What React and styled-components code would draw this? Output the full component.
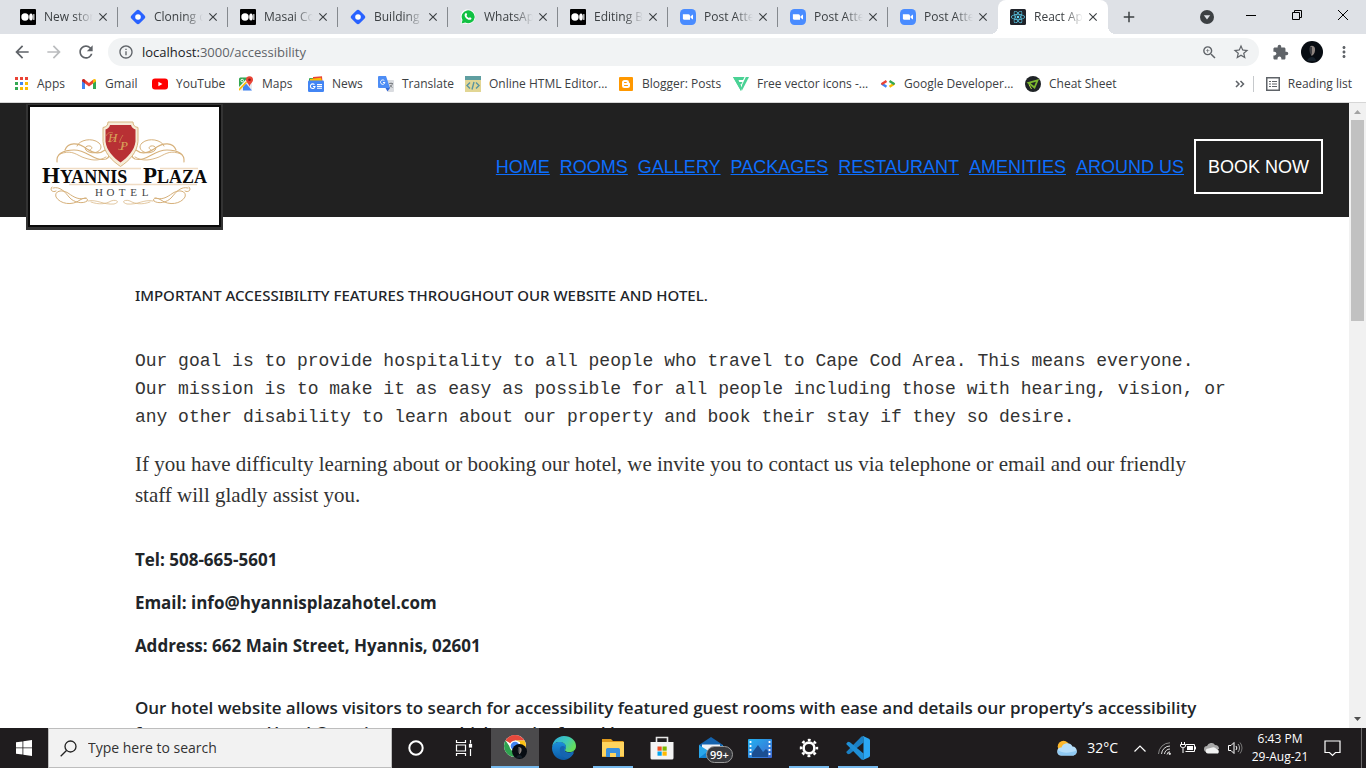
import React from "react";
import styled, { createGlobalStyle, css } from "styled-components";
import {
  MdArrowBack,
  MdArrowForward,
  MdRefresh,
  MdInfoOutline,
  MdZoomIn,
  MdStarBorder,
  MdExtension,
  MdMoreVert,
  MdClose,
  MdAdd,
} from "react-icons/md";
import { FaReact } from "react-icons/fa";

const ui = '"Open Sans", "Noto Sans", sans-serif';

const GlobalStyle = createGlobalStyle`
  *, *::before, *::after { box-sizing: border-box; }
  body { margin: 0; background: #fff; color: #212529; font-family: ${ui}; }
  button, input { font: inherit; color: inherit; }
  h1, p, ul { margin: 0; padding: 0; }
  svg { display: block; flex: none; }
`;

const Desktop = styled.div`
  display: flex;
  flex-direction: column;
  height: 100vh;
  overflow: hidden;
`;

const PlainButton = styled.button`
  display: flex;
  align-items: center;
  justify-content: center;
  padding: 0;
  border: 0;
  background: none;
  color: #5f6368;
`;

/* ---------- tab strip ---------- */

const TabStrip = styled.div`
  display: flex;
  align-items: stretch;
  height: 34px;
  flex: none;
  padding-left: 8px;
  background: #dee1e6;
`;

const Tab = styled.div`
  display: flex;
  align-items: center;
  flex: 0 1 110px;
  min-width: 0;
  padding: 0 8px 0 12px;
  border-radius: 8px 8px 0 0;
  ${(p) =>
    p.$active
      ? css`
          background: #fff;
          position: relative;
          &::before,
          &::after {
            content: "";
            position: absolute;
            bottom: 0;
            width: 8px;
            height: 8px;
          }
          &::before {
            left: -8px;
            background: radial-gradient(circle at 0 0, transparent 8px, #fff 8px);
          }
          &::after {
            right: -8px;
            background: radial-gradient(circle at 100% 0, transparent 8px, #fff 8px);
          }
        `
      : css`
          background: linear-gradient(#85898e, #85898e) right 7px / 1px 20px no-repeat;
        `}
  ${(p) => p.$plain && css`background: none;`}
`;

const TabTitle = styled.span`
  flex: 1;
  min-width: 0;
  margin: 0 1px 0 8px;
  overflow: hidden;
  white-space: nowrap;
  font-size: 12px;
  line-height: 16px;
  color: #3c4043;
  mask-image: linear-gradient(to right, #000 60%, transparent 96%);
`;

const TabClose = styled(PlainButton)`
  width: 14px;
  height: 14px;
  flex: none;
  color: #3c4043;
`;

const NewTab = styled(PlainButton)`
  width: 28px;
  margin-left: 7px;
  color: #3c4043;
`;

const WindowControls = styled.div`
  display: flex;
  margin-left: auto;
`;

const ControlButton = styled(PlainButton)`
  width: 46px;
  height: 30px;
  color: #000;
`;

const SearchTabs = styled(PlainButton)`
  width: 42px;
`;

/* ---------- toolbar ---------- */

const Toolbar = styled.div`
  display: flex;
  align-items: center;
  height: 36px;
  flex: none;
  padding: 0 6px;
  background: #fff;
`;

const ToolButton = styled(PlainButton)`
  width: 32px;
  height: 28px;
  flex: none;
  color: ${(p) => (p.$dim ? "#babcbe" : "#5f6368")};
`;

const Omnibox = styled.div`
  display: flex;
  align-items: center;
  flex: 1;
  min-width: 0;
  height: 28px;
  margin: 0 5px 0 6px;
  padding: 0 2px 0 10px;
  border-radius: 14px;
  background: #f1f3f4;
  color: #5f6368;
`;

const Url = styled.a`
  flex: 1;
  margin-left: 8px;
  font-size: 13px;
  line-height: 20px;
  color: #5f6368;
  text-decoration: none;
  b {
    font-weight: 400;
    color: #202124;
  }
`;

/* ---------- bookmarks ---------- */

const Bookmarks = styled.nav`
  display: flex;
  align-items: center;
  height: 33px;
  flex: none;
  padding: 0 14px 4px 13px;
  background: #fff;
  border-bottom: 1px solid #d6d6d6;
`;

const Bookmark = styled.a`
  display: flex;
  align-items: center;
  gap: 8px;
  flex: 0 1 ${(p) => p.$width}px;
  min-width: 0;
  font-size: 12px;
  line-height: 16px;
  white-space: nowrap;
  color: #3c4043;
  text-decoration: none;
`;

const BookmarksEnd = styled.div`
  display: flex;
  align-items: center;
  margin-left: auto;
`;

const ReadingList = styled(PlainButton)`
  gap: 8px;
  margin-left: 8px;
  padding-left: 12px;
  height: 16px;
  border-left: 1px solid #c6c9cc;
  font-size: 12px;
  line-height: 16px;
  color: #3c4043;
  white-space: nowrap;
`;

/* ---------- web page ---------- */

const Viewport = styled.div`
  display: flex;
  flex: 1;
  min-height: 0;
`;

const Page = styled.div`
  flex: 1;
  min-width: 0;
  overflow: hidden;
`;

const Header = styled.header`
  display: flex;
  align-items: flex-start;
  justify-content: space-between;
  height: 114px;
  padding: 0 26px;
  background: #212121;
`;

const Logo = styled.a`
  display: block;
  margin-top: 1px;
`;

const SiteNav = styled.nav`
  display: flex;
  align-items: center;
  gap: 10px;
  margin-top: 36px;
  font-family: "Liberation Sans", Arial, sans-serif;
  font-size: 18px;
  line-height: 24px;
  white-space: nowrap;
  a {
    color: #0d6efd;
  }
`;

const BookButton = styled.button`
  height: 55px;
  padding: 0 12px;
  border: 2px solid #fff;
  background: transparent;
  color: #fff;
`;

const Content = styled.main`
  padding: 66px 10% 0;
`;

const Heading = styled.h1`
  margin-bottom: 40px;
  font-family: "Noto Sans", sans-serif;
  font-size: 15px;
  font-weight: 500;
  line-height: 24px;
`;

const Goal = styled.p`
  margin-bottom: 18px;
  font-family: "Liberation Mono", monospace;
  font-size: 18px;
  line-height: 28px;
  white-space: nowrap;
  color: #333;
`;

const Invite = styled.p`
  margin-bottom: 36px;
  font-family: "Liberation Serif", "Times New Roman", serif;
  font-size: 21px;
  line-height: 31px;
  color: #333;
`;

const Contact = styled.p`
  margin-bottom: 18px;
  font-size: 17px;
  font-weight: 700;
  line-height: 25px;
  white-space: nowrap;
`;

const Details = styled(Contact)`
  margin-top: 37px;
  font-weight: 600;
`;

const ScrollBar = styled.div`
  display: flex;
  flex-direction: column;
  align-items: center;
  width: 17px;
  flex: none;
  background: #f1f1f1;
`;

const ScrollTrack = styled.div`
  flex: 1;
  width: 13px;
`;

const ScrollThumb = styled.div`
  height: 34%;
  background: #c1c1c1;
`;

/* ---------- taskbar ---------- */

const Taskbar = styled.footer`
  display: flex;
  height: 40px;
  flex: none;
  background: #1f1c1e;
  color: #fff;
`;

const TaskButton = styled(PlainButton)`
  width: 48px;
  flex: none;
  color: #fff;
`;

const SearchBox = styled.label`
  display: flex;
  align-items: center;
  flex: 0 1 344px;
  padding: 0 11px;
  gap: 11px;
  background: #f2f2f2;
  border: 1px solid #bdbdbd;
  color: #222;
`;

const SearchInput = styled.input`
  flex: 1;
  min-width: 0;
  padding: 0;
  border: 0;
  outline: 0;
  background: none;
  font-size: 14px;
  line-height: 20px;
  &::placeholder {
    color: #333;
    opacity: 1;
  }
`;

const Apps = styled.div`
  display: flex;
  gap: 1px;
  margin-left: 3px;
`;

const AppButton = styled(TaskButton)`
  ${(p) =>
    p.$running &&
    css`
      background: linear-gradient(#76b9ed, #76b9ed) bottom / 40px 2px no-repeat;
    `}
  ${(p) =>
    p.$current &&
    css`
      background: #4b4a4c;
      border-bottom: 2px solid #76b9ed;
    `}
`;

const AppIcon = styled.span`
  position: relative;
`;

const Badge = styled.span`
  position: absolute;
  left: 7px;
  top: 10px;
  padding: 0 3px;
  border: 1px solid #9a9a9a;
  border-radius: 9px;
  background: #38393d;
  color: #fff;
  font-size: 11px;
  font-weight: 600;
  line-height: 15px;
`;

const Tray = styled.div`
  display: flex;
  align-items: center;
  margin-left: auto;
`;

const Weather = styled.div`
  display: flex;
  align-items: center;
  gap: 9px;
  margin-right: 10px;
  font-size: 14px;
  line-height: 20px;
`;

const TrayButton = styled(PlainButton)`
  width: 24px;
  height: 40px;
  color: #fff;
`;

const Clock = styled.div`
  width: 64px;
  font-size: 12px;
  line-height: 18px;
  text-align: center;
  white-space: nowrap;
`;

const Notify = styled(PlainButton)`
  width: 50px;
  height: 40px;
  padding-right: 8px;
  border-right: 1px solid #6c6a6b;
  margin-right: 4px;
  color: #fff;
`;

/* ---------- drawings ---------- */

const MediumIcon = () => (
  <svg width="16" height="16" viewBox="0 0 16 16">
    <rect width="16" height="16" rx="1" fill="#000" />
    <circle cx="5" cy="8" r="3.7" fill="#fff" />
    <ellipse cx="11" cy="8" rx="1.8" ry="3.5" fill="#fff" />
    <rect x="13.3" y="4.9" width="1.1" height="6.2" rx="0.5" fill="#fff" />
  </svg>
);

const HashnodeIcon = () => (
  <svg width="16" height="16" viewBox="0 0 16 16">
    <rect x="2.2" y="2.2" width="11.6" height="11.6" rx="2.6" fill="#2962ff" transform="rotate(45 8 8)" />
    <circle cx="8" cy="8" r="2.8" fill="#fff" />
  </svg>
);

const WhatsAppIcon = () => (
  <svg width="16" height="16" viewBox="0 0 16 16">
    <path d="M.5 15.5l1.2-4A7.3 7.3 0 1 1 5 14.4z" fill="#fff" />
    <path d="M1.6 14.4l.9-3.4A6.5 6.5 0 1 1 5.2 13.6z" fill="#12c143" />
    <path
      d="M5.5 4.3c.5-.4.9-.2 1.1.2l.5 1.2c.1.4-.5.8-.6 1.1.4 1 1.3 1.8 2.4 2.3.4-.1.7-.9 1.1-.8l1.3.7c.4.2.1 1-.3 1.4-1 .9-2.6.4-3.9-.5-1.500-1-2.600-2.700-2.500-4 .1-.6.400-1.200.9-1.600z"
      fill="#fff"
    />
  </svg>
);

const ZoomAppIcon = () => (
  <svg width="16" height="16" viewBox="0 0 16 16">
    <rect width="16" height="16" rx="4.5" fill="#4a8cff" />
    <path d="M2.9 5.3h5.6a1.5 1.5 0 0 1 1.5 1.5v3.9H4.4a1.5 1.5 0 0 1-1.5-1.5z" fill="#fff" />
    <path d="M10.500 7.2l2.5-1.8v5.2l-2.5-1.8z" fill="#fff" />
  </svg>
);

const ReactIcon = () => (
  <svg width="16" height="16" viewBox="0 0 16 16">
    <rect width="16" height="16" rx="1.5" fill="#20232a" />
    <FaReact x="1" y="1" size={14} color="#61dafb" />
  </svg>
);

const AppsIcon = () => (
  <svg width="16" height="16" viewBox="0 0 16 16">
    {["#ea4335", "#ea4335", "#ea4335", "#34a853", "#4285f4", "#fbbc04", "#34a853", "#fbbc04", "#fbbc04"].map((c, i) => (
      <rect key={i} x={2 + (i % 3) * 5} y={1 + Math.floor(i / 3) * 5} width="3" height="3" fill={c} />
    ))}
  </svg>
);

const GmailIcon = () => (
  <svg width="16" height="16" viewBox="0 0 16 16">
    <path d="M1 4.5v8.500h3V7z" fill="#4285f4" />
    <path d="M15 4.5v8.500h-3V7z" fill="#34a853" />
    <path d="M4 3.8L8 7l4-3.2V7.5l-4 3-4-3z" fill="#ea4335" />
    <path d="M1 4.5C1 2.7 2.8 2.5 4 3.5v4L1 5.3z" fill="#c5221f" />
    <path d="M15 4.5c0-1.8-1.8-2-3-1v4l3-2.2z" fill="#fbbc04" />
  </svg>
);

const YouTubeIcon = () => (
  <svg width="16" height="16" viewBox="0 0 16 16">
    <rect y="2.5" width="16" height="11" rx="3" fill="#f00" />
    <path d="M6.4 5.7v4.6l4-2.3z" fill="#fff" />
  </svg>
);

const MapsIcon = () => (
  <svg width="16" height="16" viewBox="0 0 16 16">
    <rect x="1" y="1.5" width="13" height="13" rx="1.5" fill="#e8eaed" />
    <path d="M1 3a1.5 1.5 0 0 1 1.500-1.500H10L1 11z" fill="#34a853" />
    <path d="M5 10.500l3-3 6 7H5z" fill="#4285f4" />
    <path d="M1 14.500v-3l7-7 1.500 1.500z" fill="#fff" />
    <path d="M1 14.500v-2l7-7 1 1-7.500 8z" fill="#fbbc04" />
    <path d="M11.5.3a3.500 3.500 0 0 1 3.500 3.500c0 2.600-2.800 3.400-3.500 7-.7-3.600-3.500-4.400-3.500-7A3.500 3.500 0 0 1 11.500.3z" fill="#ea4335" />
    <circle cx="11.5" cy="3.8" r="1.3" fill="#8c1c13" />
    <circle cx="4.2" cy="4.6" r="1.3" fill="none" stroke="#fff" />
  </svg>
);

const NewsIcon = () => (
  <svg width="16" height="16" viewBox="0 0 16 16">
    <rect x="1" y="2" width="10" height="6" rx="1" fill="#34a853" />
    <path d="M5 1l9-.8.5 6H5z" fill="#ea4335" />
    <path d="M2 3l11-1.200 1 3.200H2z" fill="#fbbc04" />
    <rect y="4.5" width="16" height="11.5" rx="1.2" fill="#4285f4" />
    <path d="M6.5 8.700A2.300 2.300 0 1 0 7 10.500H5M9 8.500h5M9 10.400h5M9 12.300h5" stroke="#fff" strokeWidth="1.1" fill="none" />
  </svg>
);

const TranslateIcon = () => (
  <svg width="16" height="16" viewBox="0 0 16 16">
    <path d="M6 4h9a1 1 0 0 1 1 1v10a1 1 0 0 1-1 1h-5z" fill="#dadce0" />
    <path d="M1 0h7l4 12H1a1 1 0 0 1-1-1V1a1 1 0 0 1 1-1z" fill="#4e8df5" />
    <path d="M7.5 12H12l-2.500 3.500z" fill="#3367d6" />
    <path d="M6.4 4.700A2.200 2.200 0 1 0 6.900 6.500H5" stroke="#fff" fill="none" />
    <path d="M11 7.500h4M13 6.500v1M14.500 7.500c-.5 2-1.500 3-3 4M12 9c.6 1.200 1.500 2 2.500 2.500" stroke="#6d7175" strokeWidth=".8" fill="none" />
  </svg>
);

const EditorIcon = () => (
  <svg width="16" height="16" viewBox="0 0 16 16">
    <rect width="16" height="16" fill="#e2d694" />
    <rect width="16" height="4" fill="#5f9ea0" />
    <path d="M5 6.500L2 9.500l3 3M11 6.500l3 3-3 3M9 6l-2 7.500" stroke="#5b95a0" strokeWidth="1.4" fill="none" />
  </svg>
);

const BloggerIcon = () => (
  <svg width="16" height="16" viewBox="0 0 16 16">
    <rect x="1" y="1" width="14" height="14" rx="1" fill="#ff9800" />
    <path d="M6.5 4h2.300A2.300 2.300 0 0 1 11 6.300c0 1 1 .5 1 1.500v1.700A2.500 2.500 0 0 1 9.500 12h-3A2.500 2.500 0 0 1 4 9.500v-3A2.500 2.500 0 0 1 6.500 4z" fill="#fff" />
    <path d="M6.5 6.500h1.800M6.500 9.500h3" stroke="#ff9800" strokeLinecap="round" />
  </svg>
);

const VectorIcon = () => (
  <svg width="16" height="16" viewBox="0 0 16 16">
    <path d="M0 1h11.500L10 4H5l1 2h3.500L8.300 8.300H7L9 12l-1 3z" fill="#4ad295" />
    <path d="M0 1h4l5 11-1 3z" fill="#4ad295" />
    <path d="M12.800 1H16L9 14.500V9z" fill="#4ad295" />
  </svg>
);

const DevelopersIcon = () => (
  <svg width="16" height="16" viewBox="0 0 16 16">
    <g fill="none" strokeWidth="2.4">
      <path d="M1.500 7.500l5 3.300" stroke="#4285f4" />
      <path d="M6.500 5L1.500 8.300" stroke="#ea4335" />
      <path d="M14.500 7.500l-5 3.300" stroke="#fbbc04" />
      <path d="M9.500 5l5 3.300" stroke="#34a853" />
    </g>
  </svg>
);

const CheatIcon = () => (
  <svg width="16" height="16" viewBox="0 0 16 16">
    <circle cx="8" cy="8" r="8" fill="#1f2326" />
    <g fill="none" strokeWidth="1.800">
      <path d="M3.500 6.800L12.500 4.300 9.500 11.500z" stroke="#7cb82f" />
      <path d="M4 8.500l2.500 4.500" stroke="#b9e04a" strokeWidth="1" />
    </g>
  </svg>
);

const Avatar = ({ size = 22 }) => (
  <svg width={size} height={size} viewBox="0 0 22 22">
    <circle cx="11" cy="11" r="11" fill="#070c12" />
    <path d="M9 5.500c2-1.500 4.500-.5 5 2 .4 2.500-.5 5-2 6.500l-1.500 1-.5-4z" fill="#8d8480" />
    <path d="M9 5.500c-1 2-.6 5 .5 8l1.500-1V6z" fill="#3b3c40" />
    <path d="M6 20c1-3 3-4 5-4s3.500 1.500 4 4z" fill="#15202a" />
  </svg>
);

const Flourish = () => (
  <g fill="none" stroke="#d6b07a" strokeLinecap="round">
    <path d="M31 58c-1-8 6-12 17-12 14 0 20 12 32 9 4-2 4-5 1-8" strokeWidth="1.1" />
    <path d="M34 50c10-4 14-1 22 3 8 3 16 5 24 0" strokeWidth=".9" />
    <path d="M39 46c3-8 13-8 22-1 6 4 12 6 18 1" strokeWidth="1.2" />
    <path d="M51 42c2-6 15-9 22-3 6 6-3 12-10 9-6-2-4-7 1-6 3 1 2 3 0 4" strokeWidth="1" />
    <path d="M26 83c-3 3 1 6 4 4M27 84c7-2 12 4 16 9 5 6 14 7 18 4 2-3-3-4-7-1-8 6-20 4-24-3-2-6 6-8 12-4 7 5 11 7 18 5" strokeWidth="1" />
    <path d="M62 97c9-2 15 4 26 3 7-2 2-5-3-3-5 3-12 4-20 1" strokeWidth=".7" />
  </g>
);

const HotelLogo = () => (
  <svg width="197" height="126" viewBox="0 0 197 126" role="img" aria-label="Hyannis Plaza Hotel">
    <rect width="197" height="126" fill="#333" />
    <rect x="2" y="1" width="193" height="122" fill="#0b0b0b" />
    <rect x="4" y="3" width="189" height="118" fill="#fff" />
    <Flourish />
    <g transform="translate(189 0) scale(-1 1)">
      <Flourish />
    </g>
    <path d="M34 64.500h81M134 64.500h38M43 80.500h128" stroke="#f0dcc4" strokeWidth="1.3" />
    <path d="M82 18h25c0 3 1.500 5 5 5.500v14c-1 11-8.500 19-17.500 25-9-6-16.500-14-17.500-25v-14c3.500-.5 5-2.500 5-5.500z" fill="#f6ecd8" stroke="#d8b681" strokeWidth="1" />
    <path d="M84 21h21c.5 2.500 2 3.500 4.500 4.500v12c-1 9-8 16-15 21-7-5-14-12-15-21v-12c2.500-1 4-2 4.500-4.500z" fill="#b83034" />
    <g fontFamily="Liberation Serif, serif" fontStyle="italic" fill="#d9a45a">
      <text x="82" y="38" fontSize="13">H</text>
      <text x="94" y="46" fontSize="13">P</text>
    </g>
    <path d="M82 37c2 2 5 0 7-4M97 31c-2 3-4 7-3 8M92 45c3 2 5-1 6-5M80 32c2-4 5-4 7-3" stroke="#d9a45a" strokeWidth=".6" fill="none" />
    <g fontFamily="Liberation Serif, serif" fontWeight="700" fill="#0a0a0a">
      <text x="16" y="79" fontSize="23">
        H<tspan fontSize="18">YANNIS</tspan>
      </text>
      <text x="117" y="79" fontSize="23">
        P<tspan fontSize="18">LAZA</tspan>
      </text>
    </g>
    <g fontFamily="Liberation Serif, serif" fontSize="11" fill="#444" textAnchor="middle">
      {["H", "O", "T", "E", "L"].map((c, i) => (
        <text key={c} x={73 + i * 11.5} y="92">
          {c}
        </text>
      ))}
    </g>
  </svg>
);

const ChromeIcon = () => (
  <svg width="24" height="26" viewBox="0 0 24 26">
    <circle cx="12" cy="12" r="11" fill="#fff" />
    <path d="M12 12L2.500 6.500A11 11 0 0 1 21.500 6.500H12z" fill="#e5493c" />
    <path d="M21.500 6.500A11 11 0 0 1 12 23l4.800-8.300L17 8l-5-1.500z" fill="#fbc116" />
    <path d="M2.500 6.500A11 11 0 0 0 12 23l4.500-8-4.500-1-5-1z" fill="#2fa14f" />
    <circle cx="12" cy="12" r="5.5" fill="#fff" />
    <circle cx="12" cy="12" r="4.3" fill="#4285f4" />
    <svg x="9" y="10" width="15" height="15">
      <Avatar size={15} />
    </svg>
  </svg>
);

const EdgeIcon = () => (
  <svg width="24" height="24" viewBox="0 0 24 24">
    <defs>
      <linearGradient id="edgeTop" x1="0" y1="0" x2="1" y2="0.5">
        <stop offset="0" stopColor="#2aa9e0" />
        <stop offset="0.6" stopColor="#3fc9b8" />
        <stop offset="1" stopColor="#64dd5c" />
      </linearGradient>
      <linearGradient id="edgeBase" x1="0" y1="0" x2="0" y2="1">
        <stop offset="0" stopColor="#1b8fdc" />
        <stop offset="1" stopColor="#0c59a4" />
      </linearGradient>
    </defs>
    <path d="M0 12c.5-4.500 4.500-6 7.500-6 4 0 6.500 2 6.500 5 0 2-1 2.500-1 3.500 0 2 4 3 9 .5C20.500 20.500 16.500 24 12 24 5 24 0 18.500 0 12z" fill="url(#edgeBase)" />
    <path d="M8.500 11c-2 4 0 9.500 5.500 11 3 .6 6-1.500 8-5-5 2.500-9.500.5-10-2.500-.2-2 1-2.500 1-3.500-1.500-1.500-3-1.500-4.500 0z" fill="#1664b0" />
    <path d="M0 11.500C.5 5 5.500 0 12 0c7 0 12 4.500 12 10 0 4-3 6-6.500 6-3 0-4.500-1-4.500-1.800 0-.8 1-1.200 1-3.200C14 8 11 6 7.500 6 4 6 .8 8 0 11.500z" fill="url(#edgeTop)" />
  </svg>
);

const ExplorerIcon = () => (
  <svg width="22" height="20" viewBox="0 0 22 20">
    <path d="M0 1h9l2 2h10.500v3H0z" fill="#e09a1c" />
    <rect y="4" width="22" height="15" fill="#ffd45e" />
    <path d="M4 19v-7.500a1.500 1.500 0 0 1 1.500-1.500h11a1.500 1.500 0 0 1 1.500 1.500V19h-4v-4H8v4z" fill="#3b90dd" />
    <path d="M0 18h4v1H0zM18 18h4v1h-4z" fill="#e6a92e" />
  </svg>
);

const StoreIcon = () => (
  <svg width="24" height="24" viewBox="0 0 24 24">
    <path d="M6.500 8V1.500h11V8" fill="none" stroke="#e6e6e6" strokeWidth="1.6" />
    <path d="M.5 6h23v16a1.500 1.500 0 0 1-1.500 1.500H2A1.500 1.500 0 0 1 .5 22z" fill="#f4f4f4" />
    <rect x="7.5" y="10.5" width="4.2" height="4.2" fill="#f25022" />
    <rect x="12.5" y="10.5" width="4.2" height="4.2" fill="#7fba00" />
    <rect x="7.5" y="15.5" width="4.2" height="4.2" fill="#00a4ef" />
    <rect x="12.5" y="15.5" width="4.2" height="4.2" fill="#ffb900" />
  </svg>
);

const MailIcon = () => (
  <svg width="24" height="24" viewBox="0 0 24 24">
    <path d="M0 9l12-8 12 8v3H0z" fill="#1463ae" />
    <path d="M3 8.500h18V16H3z" fill="#f0f3f7" />
    <path d="M0 9l12 7.500L24 9v13H0z" fill="#2aa7ea" />
    <path d="M0 22L12 13l12 9z" fill="#1283d0" />
  </svg>
);

const MoviesIcon = () => (
  <svg width="24" height="19" viewBox="0 0 24 19">
    <defs>
      <linearGradient id="film" x1="0" y1="0" x2="1" y2="1">
        <stop offset="0" stopColor="#23b2f0" />
        <stop offset="1" stopColor="#3c66cf" />
      </linearGradient>
    </defs>
    <rect width="24" height="19" rx="1" fill="url(#film)" />
    <path d="M4 14l6-8 5 7 3-3 2 2v6H4z" fill="#1b4f92" />
    <path d="M2.500 2v16M21.500 2v16" stroke="#fff" strokeWidth="1.8" strokeDasharray="2 2" />
  </svg>
);

const SettingsIcon = () => (
  <svg width="20" height="20" viewBox="0 0 20 20">
    <g fill="none" stroke="#fff">
      <circle cx="10" cy="10" r="5.4" strokeWidth="2.6" />
      <circle cx="10" cy="10" r="8" strokeWidth="2.4" strokeDasharray="2.9 3.383" strokeDashoffset="1.45" />
    </g>
  </svg>
);

const CodeIcon = () => (
  <svg width="24" height="24" viewBox="0 0 24 24">
    <path d="M17.500 1v5.500L4 17.800 2 18.200.3 16.600l.4-1.200L15.500.6z" fill="#1b80c4" />
    <path d="M17.500 23v-5.500L4 6.200 2 5.800.3 7.400l.4 1.200L15.500 23.400z" fill="#1f8fd6" />
    <path d="M17 0l6 2.700c.6.3 1 .9 1 1.500v15.600c0 .6-.4 1.200-1 1.500L17 24c-.8 0-1.300-.3-1.500-.6 1 .6 2-.1 2-1.100V1.700c0-1-1-1.700-2-1.100.2-.3.700-.6 1.500-.6z" fill="#2ba7f3" />
  </svg>
);

const TaskViewIcon = () => (
  <svg width="18" height="16" viewBox="0 0 18 16" fill="none" stroke="#fff" strokeWidth="1.2">
    <path d="M1.500 0v2.500h9V0M1.500 16v-2.500h9V16M1.500 5h9v6h-9z" />
    <path d="M15.500 0v3.500M15.500 9v7" />
    <rect x="14.5" y="4.5" width="2" height="2.5" fill="#fff" />
  </svg>
);

const WeatherIcon = () => (
  <svg width="21" height="17" viewBox="0 0 21 17">
    <circle cx="6.5" cy="6.5" r="5.8" fill="#fbb72c" />
    <path d="M4 15.500a4 4 0 0 1 .5-8 6 6 0 0 1 11-1 4.600 4.600 0 0 1 1 9z" fill="#b5defa" />
    <path d="M4 15.500a4 4 0 0 1-3-5.500c5 4 12 3 18.500.5a4.500 4.500 0 0 1-3 5z" fill="#8fc9f3" />
  </svg>
);

/* ---------- data ---------- */

const tabs = [
  ["New stor", MediumIcon],
  ["Cloning c", HashnodeIcon],
  ["Masai Co", MediumIcon],
  ["Building", HashnodeIcon],
  ["WhatsAp", WhatsAppIcon],
  ["Editing B", MediumIcon],
  ["Post Atte", ZoomAppIcon],
  ["Post Atte", ZoomAppIcon],
  ["Post Atte", ZoomAppIcon],
  ["React Ap", ReactIcon],
];

const bookmarks = [
  ["Apps", AppsIcon, 68],
  ["Gmail", GmailIcon, 71],
  ["YouTube", YouTubeIcon, 86],
  ["Maps", MapsIcon, 70],
  ["News", NewsIcon, 70],
  ["Translate", TranslateIcon, 87],
  ["Online HTML Editor...", EditorIcon, 153],
  ["Blogger: Posts", BloggerIcon, 115],
  ["Free vector icons -...", VectorIcon, 147],
  ["Google Developer...", DevelopersIcon, 145],
  ["Cheat Sheet", CheatIcon, 100],
];

const links = ["HOME", "ROOMS", "GALLERY", "PACKAGES", "RESTAURANT", "AMENITIES", "AROUND US"];

export default function App() {
  return (
    <Desktop>
      <GlobalStyle />
      <TabStrip>
        {tabs.map(([title, Icon], i) => (
          <Tab key={i} $active={i === 9} $plain={i === 8}>
            <Icon />
            <TabTitle>{title}</TabTitle>
            <TabClose aria-label="Close tab">
              <MdClose size={14} />
            </TabClose>
          </Tab>
        ))}
        <NewTab aria-label="New tab">
          <MdAdd size={18} />
        </NewTab>
        <WindowControls>
          <SearchTabs aria-label="Search tabs">
            <svg width="14" height="14" viewBox="0 0 14 14">
              <circle cx="7" cy="7" r="7" fill="#3c4043" />
              <path d="M3.800 5.200h6.400L7 9.500z" fill="#dee1e6" />
            </svg>
          </SearchTabs>
          <ControlButton aria-label="Minimize">
            <svg width="10" height="10" viewBox="0 0 10 10" stroke="#000">
              <path d="M0 5.500h10" />
            </svg>
          </ControlButton>
          <ControlButton aria-label="Restore">
            <svg width="10" height="10" viewBox="0 0 10 10" stroke="#000" fill="none">
              <path d="M.5 2.500h7v7h-7zM2.500 2.500v-2h7v7h-2" />
            </svg>
          </ControlButton>
          <ControlButton aria-label="Close">
            <svg width="10" height="10" viewBox="0 0 10 10" stroke="#000">
              <path d="M0 0l10 10M10 0L0 10" />
            </svg>
          </ControlButton>
        </WindowControls>
      </TabStrip>

      <Toolbar>
        <ToolButton aria-label="Back">
          <MdArrowBack size={20} />
        </ToolButton>
        <ToolButton aria-label="Forward" $dim>
          <MdArrowForward size={20} />
        </ToolButton>
        <ToolButton aria-label="Reload">
          <MdRefresh size={20} />
        </ToolButton>
        <Omnibox>
          <MdInfoOutline size={16} />
          <Url href="#top">
            <b>localhost:</b>3000/accessibility
          </Url>
          <ToolButton aria-label="Zoom">
            <MdZoomIn size={17} />
          </ToolButton>
          <ToolButton aria-label="Bookmark this page">
            <MdStarBorder size={18} />
          </ToolButton>
        </Omnibox>
        <ToolButton aria-label="Extensions">
          <MdExtension size={17} />
        </ToolButton>
        <ToolButton aria-label="Profile">
          <Avatar />
        </ToolButton>
        <ToolButton aria-label="Menu">
          <MdMoreVert size={18} />
        </ToolButton>
      </Toolbar>

      <Bookmarks aria-label="Bookmarks">
        {bookmarks.map(([name, Icon, width]) => (
          <Bookmark key={name} href="#top" $width={width}>
            <Icon />
            {name}
          </Bookmark>
        ))}
        <BookmarksEnd>
          <PlainButton aria-label="More bookmarks">
            <svg width="10" height="8" viewBox="0 0 10 8" stroke="#5f6368" strokeWidth="1.5" fill="none">
              <path d="M1 1l3 3-3 3M5.500 1l3 3-3 3" />
            </svg>
          </PlainButton>
          <ReadingList>
            <svg width="14" height="14" viewBox="0 0 14 14" stroke="#5f6368" fill="none">
              <rect x=".75" y=".75" width="12.5" height="12.5" strokeWidth="1.5" />
              <path d="M3 4.500h2M6 4.500h5M3 7h2M6 7h5M3 9.500h2M6 9.500h5" />
            </svg>
            Reading list
          </ReadingList>
        </BookmarksEnd>
      </Bookmarks>

      <Viewport>
        <Page id="top">
          <Header>
            <Logo href="#top">
              <HotelLogo />
            </Logo>
            <SiteNav aria-label="Site">
              {links.map((name) => (
                <a key={name} href="#top">
                  {name}
                </a>
              ))}
              <BookButton>BOOK NOW</BookButton>
            </SiteNav>
          </Header>
          <Content>
            <Heading>IMPORTANT ACCESSIBILITY FEATURES THROUGHOUT OUR WEBSITE AND HOTEL.</Heading>
            <Goal>
              Our goal is to provide hospitality to all people who travel to Cape Cod Area. This means everyone.
              <br />
              Our mission is to make it as easy as possible for all people including those with hearing, vision, or
              <br />
              any other disability to learn about our property and book their stay if they so desire.
            </Goal>
            <Invite>
              If you have difficulty learning about or booking our hotel, we invite you to contact us via telephone or
              email and our friendly staff will gladly assist you.
            </Invite>
            <Contact>Tel: 508-665-5601</Contact>
            <Contact>Email: info@hyannisplazahotel.com</Contact>
            <Contact>Address: 662 Main Street, Hyannis, 02601</Contact>
            <Details>
              Our hotel website allows visitors to search for accessibility featured guest rooms with ease and details
              our property’s accessibility
              <br />
              features on our Hotel Overview page, which can be found here
            </Details>
          </Content>
        </Page>
        <ScrollBar>
          <svg width="17" height="17" viewBox="0 0 17 17">
            <path d="M5 11l3.500-4 3.500 4z" fill="#a3a3a3" />
          </svg>
          <ScrollTrack>
            <ScrollThumb />
          </ScrollTrack>
          <svg width="17" height="17" viewBox="0 0 17 17">
            <path d="M5 6l3.500 4L12 6z" fill="#505050" />
          </svg>
        </ScrollBar>
      </Viewport>

      <Taskbar>
        <TaskButton aria-label="Start">
          <svg width="16" height="16" viewBox="0 0 16 16" fill="#fff">
            <path d="M0 2.300L6.500 1.400V7.500H0zM7.300 1.300L16 0v7.500H7.300zM0 8.300h6.500v6.300L0 13.700zM7.300 8.300H16V16l-8.700-1.300z" />
          </svg>
        </TaskButton>
        <SearchBox>
          <svg width="17" height="17" viewBox="0 0 17 17" fill="none" stroke="#222" strokeWidth="1.3">
            <circle cx="10.5" cy="6.5" r="5.5" />
            <path d="M6.500 10.500L.7 16.300" />
          </svg>
          <SearchInput placeholder="Type here to search" aria-label="Type here to search" />
        </SearchBox>
        <TaskButton aria-label="Cortana">
          <svg width="16" height="16" viewBox="0 0 16 16">
            <circle cx="8" cy="8" r="6.7" fill="none" stroke="#fff" strokeWidth="2" />
          </svg>
        </TaskButton>
        <TaskButton aria-label="Task view">
          <TaskViewIcon />
        </TaskButton>
        <Apps>
          <AppButton aria-label="Chrome" $current>
            <ChromeIcon />
          </AppButton>
          <AppButton aria-label="Edge">
            <EdgeIcon />
          </AppButton>
          <AppButton aria-label="File Explorer" $running>
            <ExplorerIcon />
          </AppButton>
          <AppButton aria-label="Store">
            <StoreIcon />
          </AppButton>
          <AppButton aria-label="Mail">
            <AppIcon>
              <MailIcon />
              <Badge>99+</Badge>
            </AppIcon>
          </AppButton>
          <AppButton aria-label="Movies">
            <MoviesIcon />
          </AppButton>
          <AppButton aria-label="Settings" $running>
            <SettingsIcon />
          </AppButton>
          <AppButton aria-label="Code" $running>
            <CodeIcon />
          </AppButton>
        </Apps>
        <Tray>
          <Weather>
            <WeatherIcon />
            32°C
          </Weather>
          <TrayButton aria-label="Hidden icons">
            <svg width="12" height="7" viewBox="0 0 12 7" fill="none" stroke="#fff" strokeWidth="1.2">
              <path d="M.5 6.500L6 1l5.500 5.500" />
            </svg>
          </TrayButton>
          <TrayButton aria-label="Network">
            <svg width="13" height="13" viewBox="0 0 13 13" fill="none" stroke="#ddd" strokeWidth="1">
              <path d="M.5 12A11.500 11.500 0 0 1 12 .8" stroke="#888" />
              <path d="M3.500 12A8.500 8.500 0 0 1 12 4M6.500 12A5.500 5.500 0 0 1 12 7M9 12.500A3 3 0 0 1 12 9.800" />
              <circle cx="11.7" cy="11.8" r=".8" fill="#fff" />
            </svg>
          </TrayButton>
          <TrayButton aria-label="Battery">
            <svg width="16" height="12" viewBox="0 0 16 12" fill="none" stroke="#fff">
              <path d="M6 2.500h8.500v7H5.500M15.500 4.500v3M1.500 0v2M4.500 0v2M.5 2.500h5V4a2 2 0 0 1-2 1.500h-1A2 2 0 0 1 .5 4zM3 5.500v5.500" />
              <rect x="7.5" y="4.5" width="5" height="3" fill="#fff" />
            </svg>
          </TrayButton>
          <TrayButton aria-label="OneDrive">
            <svg width="17" height="11" viewBox="0 0 17 11">
              <path d="M3 9a3 3 0 0 1 0-6 4.500 4.500 0 0 1 8-1 4 4 0 0 1 4 4z" fill="#a8a8a8" />
              <path d="M4 10.500a2.500 2.500 0 0 1 .5-5L8 4.500a4 4 0 0 1 4.500 1.500A2.600 2.600 0 0 1 14 10.500z" fill="#f2f2f2" />
            </svg>
          </TrayButton>
          <TrayButton aria-label="Volume">
            <svg width="16" height="14" viewBox="0 0 16 14" fill="none" stroke="#fff">
              <path d="M.5 4.500h2.500l3-3v11l-3-3H.5z" />
              <path d="M8 5a3 3 0 0 1 0 4" />
              <path d="M10 3a6 6 0 0 1 0 8" stroke="#aaa" />
              <path d="M12 1.500a8.500 8.500 0 0 1 0 11" stroke="#777" />
            </svg>
          </TrayButton>
          <Clock>
            6:43 PM
            <br />
            29-Aug-21
          </Clock>
          <Notify aria-label="Notifications">
            <svg width="17" height="17" viewBox="0 0 17 17" fill="none" stroke="#fff" strokeWidth="1.2">
              <path d="M1 1h15v11.500h-4.500L8.500 15.500 5.500 12.500H1z" />
            </svg>
          </Notify>
        </Tray>
      </Taskbar>
    </Desktop>
  );
}
